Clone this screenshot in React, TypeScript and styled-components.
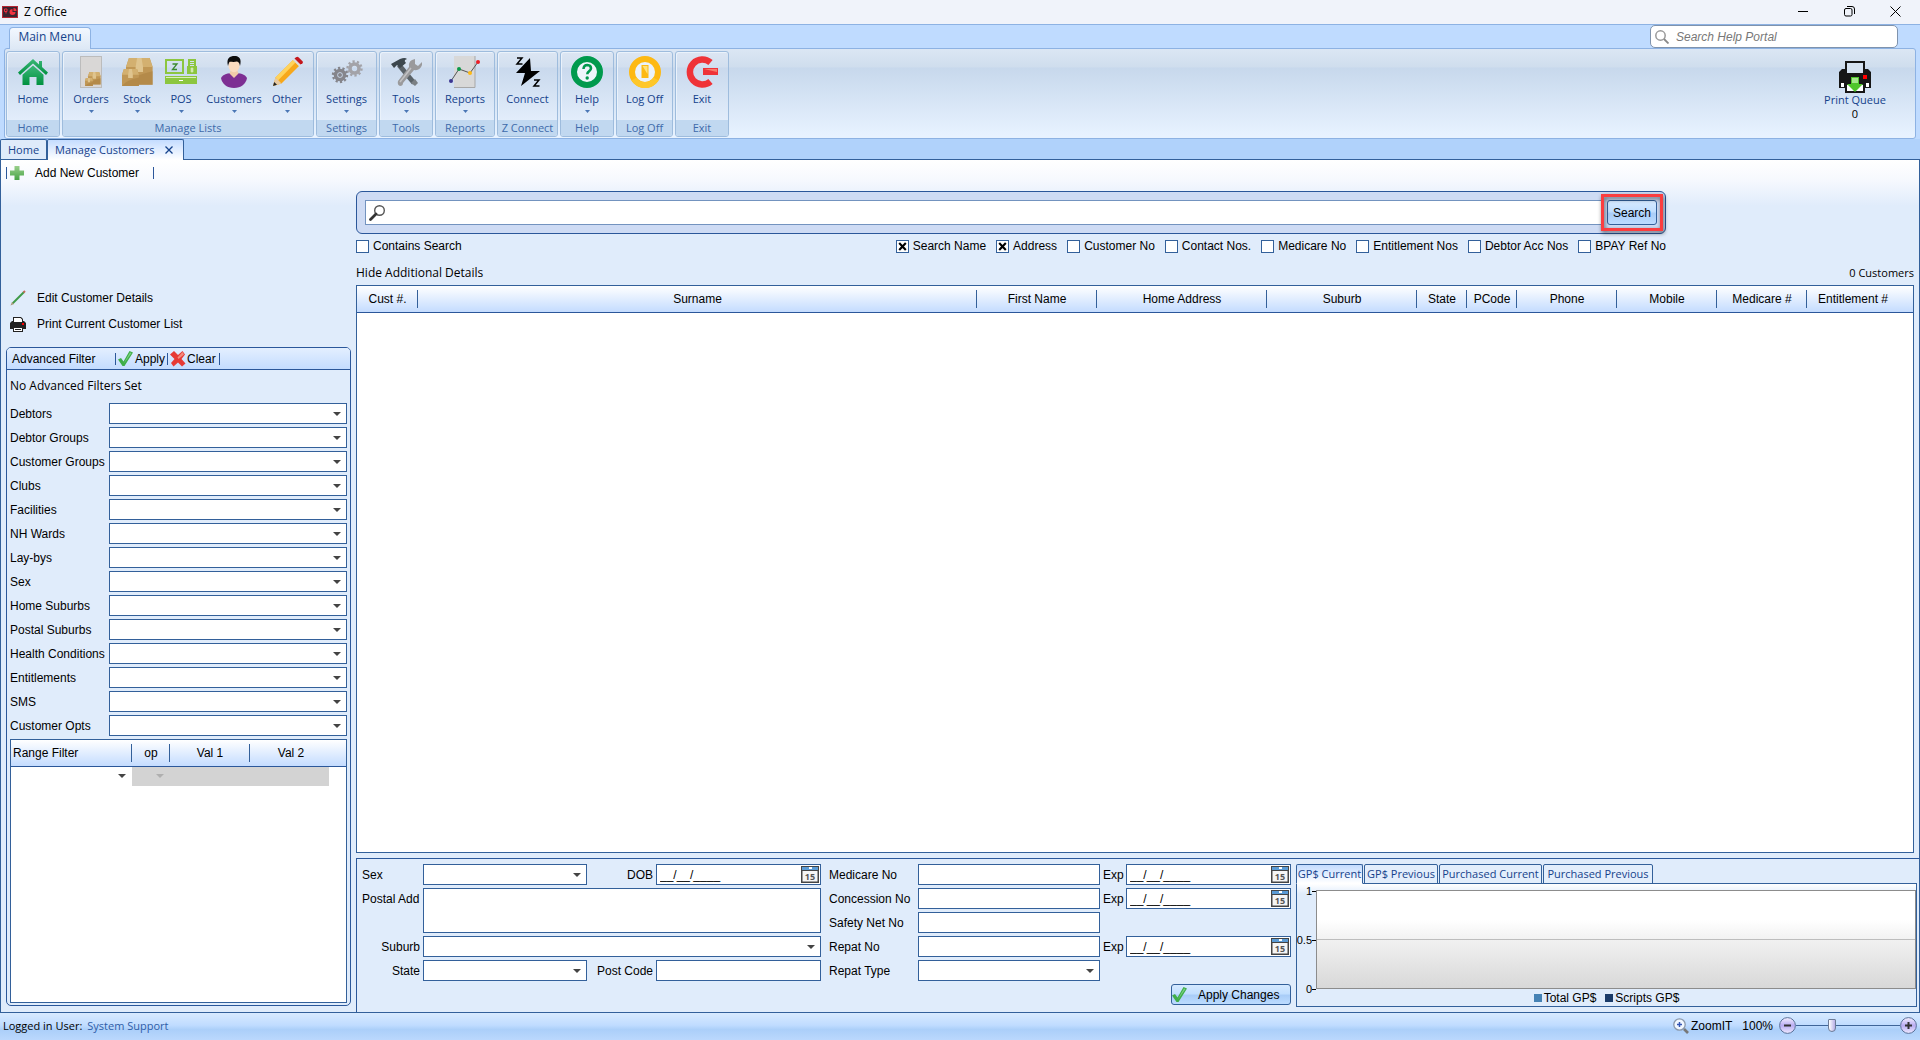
import React from "react";
import styled, { createGlobalStyle, css } from "styled-components";

const LINE = "#33609a";
const DEEP = "#2b579a";
const INK = "#15428b";
const FACE = "#e0ecfb";
const UI = `"Open Sans", "Noto Sans", sans-serif`;
const ARIAL = `"Liberation Sans", Arial, sans-serif`;

const svgUrl = (s: string) => `url("data:image/svg+xml,${encodeURIComponent(s)}")`;
const arrowImage = (color: string) =>
  svgUrl(`<svg xmlns="http://www.w3.org/2000/svg" width="8" height="4"><path d="M0 0h8L4 4z" fill="${color}"/></svg>`);
const crossImage = svgUrl(
  `<svg xmlns="http://www.w3.org/2000/svg" width="9" height="9"><path d="M1.2 1l6.6 7M7.8 1L1.2 8" stroke="#000" stroke-width="2.1"/></svg>`
);

const Global = createGlobalStyle`
  *, *::before, *::after { box-sizing: border-box; }
  body { margin: 0; background: ${FACE}; font-family: ${ARIAL}; font-size: 12px; line-height: 16px; color: #000; }
  button, input, select, textarea { font: inherit; color: inherit; margin: 0; padding: 0; border: 0; background: none; border-radius: 0; }
  h2, p { margin: 0; font-size: inherit; font-weight: normal; }
  svg { display: block; flex: none; }
`;

const Window = styled.div`
  min-height: 100vh;
  display: flex;
  flex-direction: column;
`;

/* ---------- title bar ---------- */
const TitleBar = styled.header`
  height: 25px;
  display: flex;
  align-items: center;
  gap: 6px;
  padding: 0 2px 1px;
  background: #f0f3fa;
  border-bottom: 1px solid #8db2e3;
  font-family: ${UI};
`;
const WindowButtons = styled.div`
  margin-left: auto;
  display: flex;
`;
const WindowButton = styled.button`
  width: 46px;
  height: 20px;
  display: grid;
  place-items: center;
`;

/* ---------- ribbon ---------- */
const RibbonTabs = styled.div`
  height: 23px;
  display: flex;
  align-items: flex-end;
  justify-content: space-between;
  padding: 0 22px 0 9px;
  background: #bfdbff;
`;
const RibbonTab = styled.button`
  height: 22px;
  width: 82px;
  margin-bottom: -1px;
  padding-bottom: 4px;
  border: 1px solid #8db2e3;
  border-bottom: 0;
  border-radius: 4px 4px 0 0;
  background: linear-gradient(#f2f7fe, #dde8f5);
  font-family: ${UI};
  color: ${INK};
  position: relative;
`;
const HelpSearch = styled.label`
  width: 248px;
  height: 23px;
  display: flex;
  align-items: center;
  gap: 7px;
  padding-left: 4px;
  border: 1px solid #7f93ad;
  border-radius: 5px;
  background: #fff;
  input { flex: 1; min-width: 0; outline: 0; font-style: italic; }
  input::placeholder { color: #777; opacity: 1; }
`;
const RibbonBack = styled.div`
  background: #bfdbff;
  padding: 0 4px;
`;
const Ribbon = styled.nav`
  height: 91px;
  display: flex;
  gap: 2px;
  padding: 2px 28px 1px 1px;
  border: 1px solid #8db2e3;
  border-radius: 3px;
  background: linear-gradient(#dbe6f4 0, #cfdded 18px, #c7d8ec 19px, #e7f2ff 86px, #e7f2ff 100%);
`;
const Group = styled.section<{ $w: number }>`
  width: ${(p) => p.$w}px;
  display: flex;
  flex-direction: column;
  border: 1px solid #9ebcdd;
  border-radius: 3px;
  box-shadow: inset 1px 1px 0 #eaf2fb;
  background: linear-gradient(#dce6f3 0, #d2dfef 15px, #c9d9ed 16px, #e2edfb 68px);
  overflow: hidden;
`;
const GroupItems = styled.div`
  flex: 1;
  display: flex;
  justify-content: center;
`;
const GroupTitle = styled.h2`
  height: 16px;
  line-height: 16px;
  text-align: center;
  background: #c1d8f0;
  font-family: ${UI};
  font-size: 11px;
  color: #3e6aaa;
`;
const RibbonButton = styled.button<{ $w: number }>`
  width: ${(p) => p.$w}px;
  display: flex;
  flex-direction: column;
  align-items: center;
  padding-top: 4px;
  font-family: ${UI};
  font-size: 11px;
  line-height: 16px;
  color: ${INK};
  white-space: nowrap;
`;
const RibbonLabel = styled.span`
  margin-top: 3px;
  margin-bottom: 3px;
`;
const QueueButton = styled(RibbonButton)`
  margin-left: auto;
  padding-top: 10px;
  line-height: 14px;
  small { font-size: 11px; color: #000; }
`;

/* ---------- document tabs ---------- */
const DocTabs = styled.div`
  height: 21px;
  display: flex;
  align-items: flex-end;
  background: #b0d2fb;
  border-bottom: 1px solid ${LINE};
`;
const DocTab = styled.button<{ $active?: boolean }>`
  height: 20px;
  display: flex;
  align-items: center;
  gap: 10px;
  padding: 0 7px 0 7px;
  border: 1px solid ${LINE};
  border-bottom: 0;
  border-radius: 2px 2px 0 0;
  background: #dfebfa;
  font-family: ${UI};
  font-size: 11px;
  color: ${INK};
  ${(p) =>
    p.$active &&
    css`
      height: 21px;
      margin-bottom: -1px;
      padding-right: 10px;
      background: linear-gradient(#c4dcff, #fff);
    `}
`;

/* ---------- page ---------- */
const Page = styled.main`
  flex: 1;
  display: flex;
  flex-direction: column;
  border: solid ${LINE};
  border-width: 0 1px;
  background: linear-gradient(#fff 0, #f6f9fe 20px, ${FACE} 46px);
`;
const Toolbar = styled.div`
  height: 26px;
  display: flex;
  align-items: center;
  padding-left: 5px;
`;
const Sep = styled.i`
  width: 1px;
  height: 12px;
  background: ${DEEP};
`;
const ToolButton = styled.button<{ $gap: number; $pad?: number }>`
  display: flex;
  align-items: center;
  gap: ${(p) => p.$gap}px;
  padding: 0 ${(p) => p.$pad || 0}px 0 2px;
  white-space: nowrap;
`;
const Columns = styled.div`
  flex: 1;
  display: flex;
`;

const Side = styled.aside`
  width: 355px;
  flex: none;
  display: flex;
  flex-direction: column;
  padding: 99px 5px 6px 5px;
`;
const SideLink = styled.button`
  height: 26px;
  display: flex;
  align-items: center;
  gap: 11px;
  padding-left: 4px;
`;
const FilterPanel = styled.section`
  flex: 1;
  display: flex;
  flex-direction: column;
  margin-top: 10px;
  border: 1px solid ${DEEP};
  border-radius: 5px;
`;
const FilterHead = styled.div`
  height: 22px;
  display: flex;
  align-items: center;
  padding-left: 5px;
  border-bottom: 1px solid ${DEEP};
  border-radius: 4px 4px 0 0;
  background: linear-gradient(#e3efff, #c4dcff);
  h2 { width: 103px; }
`;
const FilterBody = styled.div`
  flex: 1;
  display: flex;
  flex-direction: column;
  padding: 8px 3px 2px;
`;
const FilterNote = styled.p`
  font-family: ${UI};
  margin-bottom: 9px;
`;
const FilterRow = styled.div`
  display: grid;
  grid-template-columns: 99px 1fr;
  align-items: center;
  margin-bottom: 3px;
  white-space: nowrap;
`;

const field = css`
  height: 21px;
  min-width: 0;
  width: 100%;
  border: 1px solid ${LINE};
  background: #fff;
  outline: 0;
`;
const TextInput = styled.input`${field}`;
const TextArea = styled.textarea`
  ${field}
  height: 45px;
  resize: none;
  display: block;
`;
const Select = styled.select`
  ${field}
  appearance: none;
  background: #fff ${arrowImage("#444")} right 5px center / 8px 4px no-repeat;
`;
const BareSelect = styled.select<{ $muted?: boolean }>`
  appearance: none;
  display: block;
  width: 100%;
  height: 19px;
  outline: 0;
  background: ${(p) => arrowImage(p.$muted ? "#a0a0a0" : "#444")} right 6px center / 8px 4px no-repeat;
`;

const GridBox = styled.div`
  flex: 1;
  border: 1px solid ${LINE};
  background: #fff;
`;
const Table = styled.table`
  width: 100%;
  table-layout: fixed;
  border-collapse: collapse;
  thead { background: linear-gradient(#fff, #c4dcff); }
  thead tr { height: 26px; border-bottom: 1px solid ${DEEP}; }
  th {
    padding: 0 2px;
    font-weight: normal;
    white-space: nowrap;
    background: linear-gradient(${LINE}, ${LINE}) right center / 1px 18px no-repeat;
  }
  th:last-child { background: none; padding-right: 16px; }
  td { padding: 0; height: 19px; }
  td:last-child { padding-right: 17px; }
`;
const RangeTable = styled(Table)`
  th:first-child { text-align: left; }
`;
const MutedCell = styled.td`
  background: #d3d3d3;
`;
const MutedFill = styled.div`
  height: 19px;
  background: #d3d3d3;
`;

const Main = styled.div`
  flex: 1;
  min-width: 0;
  display: flex;
  flex-direction: column;
`;
const SearchArea = styled.div`
  width: 1310px;
  max-width: 100%;
  padding-top: 5px;
`;
const SearchBox = styled.form`
  height: 43px;
  display: flex;
  align-items: center;
  gap: 5px;
  padding: 0 8px;
  border: 1px solid ${DEEP};
  border-radius: 6px;
  background: #cedbf4;
`;
const SearchField = styled.label`
  flex: 1;
  height: 25px;
  display: flex;
  align-items: center;
  padding-left: 3px;
  border: 1px solid #7393bf;
  background: #fff;
  input { flex: 1; margin-left: 6px; outline: 0; }
`;
const Highlight = styled.div`
  position: relative;
  &::after {
    content: "";
    position: absolute;
    inset: -6px;
    border: 3px solid #fb3d3f;
    filter: drop-shadow(1px 2px 2px rgba(0, 0, 0, 0.6));
    pointer-events: none;
  }
`;
const PushButton = styled.button`
  display: flex;
  align-items: center;
  border: 1px solid ${LINE};
  border-radius: 3px;
  background: linear-gradient(#d5e9ff 0, #c2dfff 45%, #a9cdf8 55%, #bddcff 100%);
`;
const SearchButton = styled(PushButton)`
  width: 50px;
  height: 25px;
  justify-content: center;
`;
const CheckRow = styled.div`
  display: flex;
  gap: 10px;
  margin-top: 4px;
`;
const Check = styled.label`
  display: flex;
  align-items: center;
  gap: 4px;
  white-space: nowrap;
  &:first-child { margin-right: auto; }
  input {
    appearance: none;
    width: 13px;
    height: 13px;
    border: 1px solid ${LINE};
    background: #fff;
  }
  input:checked { background: #fff ${crossImage} center no-repeat; }
`;
const GridCaption = styled.div`
  display: flex;
  justify-content: space-between;
  margin: 11px 5px 4px 0;
  font-family: ${UI};
  button { line-height: 16px; }
  span { font-size: 11px; }
`;
const MainGrid = styled(GridBox)`
  margin: 0 5px 5px 0;
`;
const Details = styled.section`
  display: flex;
  align-items: flex-start;
  gap: 5px;
  padding: 5px 2px 5px 5px;
  border: solid ${DEEP};
  border-width: 1px 0 0 1px;
`;
const DetailForm = styled.form`
  display: grid;
  grid-template-columns: 58px 164px 63px 165px 91px 182px 20px 165px;
  grid-auto-rows: 21px;
  gap: 3px;
  align-items: center;
  white-space: nowrap;
`;
const Cell = styled.div<{ $at: string }>`
  grid-area: ${(p) => p.$at};
  display: flex;
`;
const Label = styled.label<{ $at: string; $right?: boolean }>`
  grid-area: ${(p) => p.$at};
  text-align: ${(p) => (p.$right ? "right" : "left")};
  padding-left: ${(p) => (p.$at.endsWith("/ 5") ? 5 : 0)}px;
`;
const DateBox = styled.div`
  ${field}
  display: flex;
  align-items: center;
  padding: 0 1px 0 3px;
  input { flex: 1; min-width: 0; outline: 0; height: 19px; }
`;
const ApplyButton = styled(PushButton)`
  width: 120px;
  height: 21px;
  margin-left: auto;
  gap: 10px;
`;

const Chart = styled.section`
  flex: 1;
  min-width: 0;
  height: 143px;
  display: flex;
  flex-direction: column;
`;
const ChartTabs = styled.div`
  display: flex;
  gap: 1px;
`;
const ChartTab = styled.button<{ $w: number; $active?: boolean }>`
  width: ${(p) => p.$w}px;
  height: 20px;
  border: 1px solid ${LINE};
  border-radius: 2px 2px 0 0;
  background: #e3eefc;
  font-family: ${UI};
  font-size: 11px;
  color: ${INK};
  white-space: nowrap;
  display: grid;
  place-content: center;
  ${(p) =>
    p.$active &&
    css`
      position: relative;
      border-bottom-color: #fff;
      background: linear-gradient(#c4dcff, #fff);
    `}
`;
const ChartBody = styled.div`
  flex: 1;
  margin-top: -1px;
  display: flex;
  flex-direction: column;
  border: 1px solid ${LINE};
  background: linear-gradient(#fff, ${FACE} 10px);
`;
const PlotRow = styled.div`
  height: 112px;
  display: flex;
`;
const Axis = styled.div`
  width: 19px;
  display: flex;
  flex-direction: column;
  justify-content: space-between;
  align-items: flex-end;
  line-height: 14px;
  font-size: 11px;
  span { display: flex; align-items: center; }
  span::after { content: ""; width: 4px; height: 1px; background: #000; }
`;
const Plot = styled.div`
  flex: 1;
  margin: 6px 0 7px;
  border: 1px solid #8c8c8c;
  background:
    linear-gradient(#bdbdbd, #bdbdbd) center / 100% 1px no-repeat,
    linear-gradient(#fff 30%, #f0f0f0 52%, #d8d8d8);
`;
const Legend = styled.div`
  display: flex;
  justify-content: center;
  gap: 9px;
  margin-top: -6px;
  line-height: 16px;
`;
const LegendItem = styled.span<{ $c: string }>`
  display: flex;
  align-items: center;
  gap: 2px;
  &::before { content: ""; width: 8px; height: 8px; background: ${(p) => p.$c}; }
`;

/* ---------- status bar ---------- */
const StatusBar = styled.footer`
  height: 28px;
  display: flex;
  align-items: center;
  padding: 0 3px 2px;
  border-top: 1px solid ${LINE};
  background: linear-gradient(#d8eaff 0, #c0dcff 45%, #abcff9 62%, #bbd8fd 100%);
  font-family: ${UI};
  font-size: 11px;
  a { color: #2f5da8; text-decoration: none; margin-left: 5px; }
`;
const ZoomTools = styled.div`
  margin-left: auto;
  display: flex;
  align-items: center;
  font-family: ${ARIAL};
  font-size: 12px;
  output { margin: 0 6px 0 10px; }
`;
const RoundButton = styled.button`
  width: 17px;
  height: 17px;
`;
const Slider = styled.input`
  appearance: none;
  width: 104px;
  height: 14px;
  background: linear-gradient(#3f6599, #3f6599) center / 100% 1px no-repeat;
  outline: 0;
  &::-webkit-slider-thumb {
    appearance: none;
    width: 8px;
    height: 13px;
    border: 1px solid #6d7b96;
    border-radius: 1px 1px 4px 4px;
    background: linear-gradient(90deg, #fff, #b7aee6);
  }
`;

/* ---------- icons ---------- */
const AppIcon = () => (
  <svg width="16" height="12" viewBox="0 0 16 12">
    <rect width="16" height="12" fill="#3a2530" />
    <rect x=".5" y=".5" width="15" height="11" fill="none" stroke="#b32633" />
    <path d="M2.500 3h2.500v2.500h-2.500zM4 6v1.500" stroke="#f2313f" fill="none" />
    <path d="M10.500 3a3 3 0 1 0 3 3h-3zM11.500 2v3h3a3 3 0 0 0-3-3z" fill="#f2313f" />
  </svg>
);
const HomeIcon = () => (
  <svg width="32" height="32" viewBox="0 0 32 32">
    <defs><linearGradient id="hm" x1="0" y1="0" x2="0" y2="1"><stop offset="0" stopColor="#3cb878" /><stop offset="1" stopColor="#00913f" /></linearGradient></defs>
    <path d="M16 3l6 5.400V5h3v6l6 5.600-2 2.400L16 7.500 3 19l-2-2.400z" fill="url(#hm)" />
    <path d="M16 9.500l10.500 9.300V29h-7v-8h-7v8h-7V18.800z" fill="url(#hm)" />
  </svg>
);
const Box = ({ x, y, s }: { x: number; y: number; s: number }) => (
  <g transform={`translate(${x} ${y}) scale(${s})`}>
    <path d="M2 0h14l2 6v12H0V6z" fill="#c09755" />
    <path d="M2 0h14l2 6H0z" fill="#d3b070" />
    <path d="M7.500 0h3l1 6v3.500h-5V6z" fill="#dfc48e" />
    <path d="M0 18Q4 12 18 9v9z" fill="#a97f40" opacity=".55" />
  </g>
);
const OrdersIcon = () => (
  <svg width="32" height="32" viewBox="0 0 32 32">
    <rect x="5.500" y=".5" width="21" height="31" fill="#d9d7d6" stroke="#bcbcbc" />
    <Box x={13} y={16} s={0.7} /><Box x={10} y={22} s={0.44} />
  </svg>
);
const StockIcon = () => (
  <svg width="32" height="32" viewBox="0 0 32 32"><Box x={5} y={2} s={1.48} /><Box x={1} y={13} s={0.94} /></svg>
);
const PosIcon = () => (
  <svg width="34" height="32" viewBox="0 0 34 32">
    <g fill="none" stroke="#8cc63f" strokeWidth="2">
      <rect x="2" y="4" width="17" height="13" />
      <path d="M25 11V4h6v7" />
    </g>
    <path d="M23 10h10v8H23zM1 20h32v8H1z" fill="#8cc63f" />
    <path d="M2 21.500h30" stroke="#d9efb9" />
    <path d="M26 6.500h4M26 8.500h4" stroke="#8cc63f" />
    <path d="M28 11.500v5M26.500 13h3M26.500 15h3" stroke="#e8f5d8" /><path d="M15 24.500h4" stroke="#fff" />
    <path d="M8.500 8h4.500l-4.500 5.500H13" fill="none" stroke="#3b8a2e" strokeWidth="1.300" />
  </svg>
);
const CustomersIcon = () => (
  <svg width="32" height="32" viewBox="0 0 32 32">
    <path d="M3 22c2-4 7-5 13-5s11 1 13 5c-1 6-6 10-13 10S4 28 3 22z" fill="#7d2f93" />
    <path d="M11.500 17.500L16 22l4.500-4.500L19 14h-6z" fill="#f1cba9" />
    <ellipse cx="16" cy="9.500" rx="5.500" ry="6.800" fill="#fbdcc0" />
    <path d="M10 10C8 2 12 0 16.500 0S24 2.500 22 10c-.5-3-1.500-4-3-4.500-3 1-7 0-7.500 .5S10.500 8 10 10z" fill="#0d0d0d" />
  </svg>
);
const PencilIcon = () => (
  <svg width="32" height="32" viewBox="0 0 32 32">
    <path d="M2 30l2.500-8.500L22 4l6 6L10.500 27.500z" fill="#f7a81b" />
    <path d="M4.500 21.500L22 4l2.500 2.500L7 24.500z" fill="#ffd35c" />
    <path d="M2 30l2.500-8.500 6 6z" fill="#e7c9a0" /><path d="M2 30l1.200-4 2.800 2.800z" fill="#222" />
    <path d="M22 4l1.500-1.500 6 6L28 10z" fill="#ddd" /><path d="M23.500 2.500L25 1.200q1.500-.8 2.500 0l4 4q.8 1.300 0 2L29.500 8.500z" fill="#c4161c" />
  </svg>
);
const Gear = ({ x, y, r, c }: { x: number; y: number; r: number; c: string }) => (
  <g transform={`translate(${x} ${y})`}>
    <circle r={r - 2.5} fill="none" stroke={c} strokeWidth="3.600" />
    <circle r={r} fill="none" stroke={c} strokeWidth="2.400" strokeDasharray={`${(Math.PI * r) / 10} ${(Math.PI * r) / 10}`} />
  </g>
);
const SettingsIcon = () => (
  <svg width="32" height="32" viewBox="0 0 32 32">
    <Gear x={23.500} y={12.500} r={7} c="#a3a3a8" /><Gear x={9} y={19} r={7} c="#85858b" /><circle cx="9" cy="19" r="2" fill="#85858b" />
  </svg>
);
const ToolsIcon = () => (
  <svg width="32" height="32" viewBox="0 0 32 32">
    <path d="M9 9l15 18" stroke="#5a6268" strokeWidth="5" />
    <path d="M1 8l9-5q5-2 7 0l-2 1q-1 1 1 3l-6 5-3-3-3 3z" fill="#3c474d" />
    <path d="M21 27l4 3 3-3-3-4" fill="#7b8084" />
    <path d="M25 3q-7 1-6 8L8 25q-1 4 2 5 3 0 3-3l11-13q6 1 8-5V6l-4 4-3-2V3z" fill="#9a9a9c" />
    <path d="M21 12L10 26" stroke="#c2c2c4" strokeWidth="1.500" />
  </svg>
);
const ReportsIcon = () => (
  <svg width="32" height="32" viewBox="0 0 32 32">
    <path d="M5 0h21v31H5z" fill="#d8d8d8" /><path d="M26 0v31.500H5" fill="none" stroke="#a7a7a7" />
    <path d="M2 25l8-12 11 4 8-11" fill="none" stroke="#555" />
    <circle cx="2" cy="25" r="2" fill="#3b3590" /><circle cx="10" cy="13" r="2" fill="#0a9a48" /><circle cx="21" cy="17" r="2" fill="#fdb913" /><circle cx="29" cy="6" r="2" fill="#ed1c24" />
  </svg>
);
const ConnectIcon = () => (
  <svg width="32" height="32" viewBox="0 0 32 32">
    <path d="M18 2L4 17h9L9 30l19-15h-9z" fill="#000" />
    <path d="M5 2h5L5 8h5.500M22 24h5l-5 6h5.500" fill="none" stroke="#000" strokeWidth="1.500" />
  </svg>
);
const HelpIcon = () => (
  <svg width="32" height="32" viewBox="0 0 32 32">
    <circle cx="16" cy="16" r="13" fill="#eef5fb" stroke="#009a4d" strokeWidth="6" />
    <path d="M12.500 13q.3-4 3.800-4 3.700.2 3.700 3.300 0 1.700-2 3-1.700 1.100-1.700 3" fill="none" stroke="#009a4d" strokeWidth="2.600" />
    <circle cx="16.200" cy="22" r="1.700" fill="#009a4d" />
  </svg>
);
const LogOffIcon = () => (
  <svg width="32" height="32" viewBox="0 0 32 32">
    <circle cx="16" cy="16" r="13" fill="#eaf2fb" stroke="#fdb913" strokeWidth="6" />
    <path d="M5 23a13 13 0 0 0 22 0" fill="none" stroke="#fec72a" strokeWidth="6" />
    <path d="M12.500 9h7v13h-7z" fill="#fdb913" /><path d="M13.500 10h5v8z" fill="#ffe27a" />
  </svg>
);
const ExitIcon = () => (
  <svg width="32" height="32" viewBox="0 0 32 32">
    <path d="M24.500 6.500A12.500 12.500 0 1 0 24.500 25.500" fill="none" stroke="#ef3338" strokeWidth="6.500" />
    <path d="M17 12h15v7H17z" fill="#ef3338" /><path d="M18 13h13v3z" fill="#f77b6b" />
  </svg>
);
const QueueIcon = () => (
  <svg width="32" height="32" viewBox="0 0 32 32">
    <path d="M6 8V0h20v8h3l3 3v16h-6v5H6v-5H0V11l3-3z" fill="#161616" />
    <path d="M8 2h16v10H8z" fill="#d5e2f1" /><path d="M8 24h16v6H8z" fill="#fff" />
    <path d="M2 22h3v4H2zM27 22h3v4h-3z" fill="#fff" /><rect x="24" y="14" width="4" height="4" fill="#f00" />
    <path d="M12 16h8v7h4l-8 8-8-8h4z" fill="#4fc52b" /><path d="M13 17h6v5h-6z" fill="#a5e88c" />
  </svg>
);
const PrinterIcon = () => (
  <svg width="16" height="16" viewBox="0 0 16 16">
    <path d="M3 5V1h8l2 2v2h1l2 2v6h-3v3H3v-3H0V7l2-2z" fill="#222" />
    <path d="M4 2h6.500L12 3.500V6H4zM4 12h8v3H4z" fill="#fff" /><path d="M5 13.500h6" stroke="#222" /><rect x="12" y="7" width="2" height="2" fill="#f00" />
  </svg>
);
const PlusIcon = () => (
  <svg width="16" height="16" viewBox="0 0 16 16">
    <defs><linearGradient id="pl" x1="0" y1="0" x2="0" y2="1"><stop offset="0" stopColor="#9ad08c" /><stop offset="1" stopColor="#46a344" /></linearGradient></defs>
    <path d="M5.500 1h5v4.500H15v5h-4.500V15h-5v-4.500H1v-5h4.500z" fill="url(#pl)" />
  </svg>
);
const ThinPencilIcon = () => (
  <svg width="16" height="16" viewBox="0 0 16 16"><path d="M2.500 13.500L14 2" stroke="#3f9b48" strokeWidth="2" /><path d="M13.500 2.500L15 1" stroke="#c66a5a" strokeWidth="2" /><path d="M.5 15.500l1.500-3.500 2 2z" fill="#a89878" /></svg>
);
const TickIcon = () => (
  <svg width="16" height="16" viewBox="0 0 16 16"><path d="M0 8.500l3-1.500 2.500 3.500L11.500 0 15 1.500 6.500 15H4.500z" fill="#3fae49" /><path d="M12 1.500l1.500.5-8 11z" fill="#7fd184" /></svg>
);
const CrossIcon = () => (
  <svg width="16" height="16" viewBox="0 0 16 16"><path d="M4 0l4 4 4.500-4L15 3.500 11.500 8l4 4.500L12 15.500l-4-4-4.500 4L1 12l3.500-4L0 3.500z" fill="#e63a35" /><path d="M12.500 1L14 3.500 8.500 8l-1-1.500z" fill="#f58b7c" /></svg>
);
const LensIcon = () => (
  <svg width="16" height="16" viewBox="0 0 16 16"><circle cx="10.500" cy="5.500" r="4.800" fill="none" stroke="#555" strokeWidth="1.400" /><path d="M7 9l-5.500 5.500" stroke="#333" strokeWidth="2.800" strokeLinecap="round" /></svg>
);
const HelpLensIcon = () => (
  <svg width="14" height="14" viewBox="0 0 14 14"><circle cx="5.500" cy="5.500" r="4.700" fill="none" stroke="#999" strokeWidth="1.500" /><path d="M9 9l4.500 4.500" stroke="#888" strokeWidth="1.800" /></svg>
);
const ZoomIcon = () => (
  <svg width="18" height="16" viewBox="0 0 18 16"><circle cx="6.500" cy="6.500" r="5.700" fill="#f2f8ff" stroke="#8a98ab" strokeWidth="1.300" /><path d="M6.500 4v5M4 6.500h5" stroke="#3455b5" strokeWidth="1.500" /><path d="M11 11l4 4" stroke="#777" strokeWidth="2.600" /></svg>
);
const CalendarIcon = () => (
  <svg width="18" height="17" viewBox="0 0 18 17">
    <rect x=".75" y=".75" width="16.500" height="15.500" fill="#f5f5f5" stroke="#444" strokeWidth="1.500" />
    <path d="M1 1h16v3H1z" fill="#5b9bd5" /><path d="M8 1h3v2H8z" fill="#fff" /><path d="M1 4.500h16" stroke="#444" />
    <text x="9" y="14" fontFamily="Open Sans, sans-serif" fontSize="9" fontWeight="700" textAnchor="middle" fill="#555">15</text>
  </svg>
);
const RoundIcon = ({ plus }: { plus?: boolean }) => (
  <svg width="17" height="17" viewBox="0 0 17 17">
    <defs><linearGradient id="rd" x1="0" y1="0" x2="0" y2="1"><stop offset="0" stopColor="#f4f0ff" /><stop offset=".5" stopColor="#b9acf2" /><stop offset="1" stopColor="#efeaff" /></linearGradient></defs>
    <circle cx="8.500" cy="8.500" r="7.900" fill="url(#rd)" stroke="#5b7299" />
    <path d={plus ? "M5 8.500h7M8.500 5v7" : "M5 8.500h7"} stroke="#333" strokeWidth="2" />
  </svg>
);
const DownArrow = () => <svg width="5" height="3" viewBox="0 0 5 3"><path d="M0 0h5L2.500 3z" fill="#4a76b5" /></svg>;

/* ---------- data ---------- */
type Item = { label: string; icon: React.FC; w: number; menu?: boolean };
const groups: { title: string; w: number; items: Item[] }[] = [
  { title: "Home", w: 54, items: [{ label: "Home", icon: HomeIcon, w: 50 }] },
  {
    title: "Manage Lists",
    w: 252,
    items: [
      { label: "Orders", icon: OrdersIcon, w: 48, menu: true },
      { label: "Stock", icon: StockIcon, w: 44, menu: true },
      { label: "POS", icon: PosIcon, w: 44, menu: true },
      { label: "Customers", icon: CustomersIcon, w: 62, menu: true },
      { label: "Other", icon: PencilIcon, w: 44, menu: true },
    ],
  },
  { title: "Settings", w: 61, items: [{ label: "Settings", icon: SettingsIcon, w: 56, menu: true }] },
  { title: "Tools", w: 54, items: [{ label: "Tools", icon: ToolsIcon, w: 50, menu: true }] },
  { title: "Reports", w: 60, items: [{ label: "Reports", icon: ReportsIcon, w: 56, menu: true }] },
  { title: "Z Connect", w: 61, items: [{ label: "Connect", icon: ConnectIcon, w: 56 }] },
  { title: "Help", w: 54, items: [{ label: "Help", icon: HelpIcon, w: 50, menu: true }] },
  { title: "Log Off", w: 57, items: [{ label: "Log Off", icon: LogOffIcon, w: 50 }] },
  { title: "Exit", w: 54, items: [{ label: "Exit", icon: ExitIcon, w: 50 }] },
];
const filters = [
  "Debtors", "Debtor Groups", "Customer Groups", "Clubs", "Facilities", "NH Wards", "Lay-bys", "Sex",
  "Home Suburbs", "Postal Suburbs", "Health Conditions", "Entitlements", "SMS", "Customer Opts",
];
const checks: [string, boolean][] = [
  ["Contains Search", false], ["Search Name", true], ["Address", true], ["Customer No", false], ["Contact Nos.", false],
  ["Medicare No", false], ["Entitlement Nos", false], ["Debtor Acc Nos", false], ["BPAY Ref No", false],
];
const columns: [string, number?][] = [
  ["Cust #.", 61], ["Surname"], ["First Name", 120], ["Home Address", 170], ["Suburb", 150], ["State", 50],
  ["PCode", 50], ["Phone", 100], ["Mobile", 100], ["Medicare #", 90], ["Entitlement #", 106],
];

const DateField = ({ id }: { id: string }) => (
  <DateBox>
    <input id={id} type="text" defaultValue="__/__/____" />
    <button type="button" aria-label="Choose date"><CalendarIcon /></button>
  </DateBox>
);

export default function App() {
  return (
    <Window>
      <Global />
      <TitleBar>
        <AppIcon />
        <span>Z Office</span>
        <WindowButtons>
          <WindowButton aria-label="Minimise"><svg width="11" height="11"><path d="M0 5.500h10" stroke="#000" /></svg></WindowButton>
          <WindowButton aria-label="Restore"><svg width="11" height="11" fill="none" stroke="#000"><rect x=".5" y="2.500" width="7.500" height="7.500" rx="1.500" /><path d="M3 .5h5q2.500 0 2.500 2.500v5" /></svg></WindowButton>
          <WindowButton aria-label="Close"><svg width="11" height="11"><path d="M.5.5l10 10M10.500.5l-10 10" stroke="#000" /></svg></WindowButton>
        </WindowButtons>
      </TitleBar>
      <RibbonTabs>
        <RibbonTab>Main Menu</RibbonTab>
        <HelpSearch>
          <HelpLensIcon />
          <input type="text" placeholder="Search Help Portal" aria-label="Search Help Portal" />
        </HelpSearch>
      </RibbonTabs>
      <RibbonBack>
        <Ribbon>
          {groups.map((g) => (
            <Group key={g.title} $w={g.w}>
              <GroupItems>
                {g.items.map((it) => (
                  <RibbonButton key={it.label} $w={it.w}>
                    <it.icon />
                    <RibbonLabel>{it.label}</RibbonLabel>
                    {it.menu && <DownArrow />}
                  </RibbonButton>
                ))}
              </GroupItems>
              <GroupTitle>{g.title}</GroupTitle>
            </Group>
          ))}
          <QueueButton $w={64}>
            <QueueIcon />
            <span>Print Queue</span>
            <small>0</small>
          </QueueButton>
        </Ribbon>
      </RibbonBack>
      <DocTabs>
        <DocTab>Home</DocTab>
        <DocTab $active>
          Manage Customers
          <svg width="8" height="8"><path d="M.5.5l7 7M7.500.5l-7 7" stroke={INK} strokeWidth="1.300" /></svg>
        </DocTab>
      </DocTabs>
      <Page>
        <Toolbar>
          <Sep />
          <ToolButton $gap={10} $pad={14}><PlusIcon />Add New Customer</ToolButton>
          <Sep />
        </Toolbar>
        <Columns>
          <Side>
            <SideLink><ThinPencilIcon />Edit Customer Details</SideLink>
            <SideLink><PrinterIcon />Print Current Customer List</SideLink>
            <FilterPanel>
              <FilterHead>
                <h2>Advanced Filter</h2>
                <Sep />
                <ToolButton $gap={1} $pad={2}><TickIcon />Apply</ToolButton>
                <Sep />
                <ToolButton $gap={1} $pad={3}><CrossIcon />Clear</ToolButton>
                <Sep />
              </FilterHead>
              <FilterBody>
                <FilterNote>No Advanced Filters Set</FilterNote>
                {filters.map((f, i) => (
                  <FilterRow key={f}>
                    <label htmlFor={`f${i}`}>{f}</label>
                    <Select id={`f${i}`} />
                  </FilterRow>
                ))}
                <GridBox>
                  <RangeTable>
                    <colgroup><col width={121} /><col width={38} /><col width={80} /><col /></colgroup>
                    <thead><tr><th>Range Filter</th><th>op</th><th>Val 1</th><th>Val 2</th></tr></thead>
                    <tbody>
                      <tr>
                        <td><BareSelect aria-label="Range Filter" /></td>
                        <MutedCell><BareSelect aria-label="op" $muted disabled /></MutedCell>
                        <MutedCell />
                        <td><MutedFill /></td>
                      </tr>
                    </tbody>
                  </RangeTable>
                </GridBox>
              </FilterBody>
            </FilterPanel>
          </Side>
          <Main>
            <SearchArea>
              <SearchBox onSubmit={(e) => e.preventDefault()}>
                <SearchField>
                  <LensIcon />
                  <input type="text" aria-label="Search customers" />
                </SearchField>
                <Highlight><SearchButton>Search</SearchButton></Highlight>
              </SearchBox>
              <CheckRow>
                {checks.map(([label, on]) => (
                  <Check key={label}><input type="checkbox" defaultChecked={on} />{label}</Check>
                ))}
              </CheckRow>
            </SearchArea>
            <GridCaption>
              <button>Hide Additional Details</button>
              <span>0 Customers</span>
            </GridCaption>
            <MainGrid>
              <Table>
                <colgroup>{columns.map(([c, w]) => <col key={c} width={w} />)}</colgroup>
                <thead><tr>{columns.map(([c]) => <th key={c}>{c}</th>)}</tr></thead>
              </Table>
            </MainGrid>
            <Details>
              <DetailForm onSubmit={(e) => e.preventDefault()}>
                <Label $at="1 / 1" htmlFor="sex">Sex</Label>
                <Cell $at="1 / 2"><Select id="sex" /></Cell>
                <Label $at="1 / 3" $right htmlFor="dob">DOB</Label>
                <Cell $at="1 / 4"><DateField id="dob" /></Cell>
                <Label $at="2 / 1" htmlFor="addr">Postal Add</Label>
                <Cell $at="2 / 2 / 4 / 5"><TextArea id="addr" /></Cell>
                <Label $at="4 / 1" $right htmlFor="suburb">Suburb</Label>
                <Cell $at="4 / 2 / 5 / 5"><Select id="suburb" /></Cell>
                <Label $at="5 / 1" $right htmlFor="state">State</Label>
                <Cell $at="5 / 2"><Select id="state" /></Cell>
                <Label $at="5 / 3" $right htmlFor="post">Post Code</Label>
                <Cell $at="5 / 4"><TextInput id="post" type="text" /></Cell>
                {["Medicare No", "Concession No", "Safety Net No", "Repat No"].map((l, i) => (
                  <React.Fragment key={l}>
                    <Label $at={`${i + 1} / 5`} htmlFor={`n${i}`}>{l}</Label>
                    <Cell $at={`${i + 1} / 6`}><TextInput id={`n${i}`} type="text" /></Cell>
                    {i !== 2 && (
                      <>
                        <Label $at={`${i + 1} / 7`} $right htmlFor={`e${i}`}>Exp</Label>
                        <Cell $at={`${i + 1} / 8`}><DateField id={`e${i}`} /></Cell>
                      </>
                    )}
                  </React.Fragment>
                ))}
                <Label $at="5 / 5" htmlFor="rtype">Repat Type</Label>
                <Cell $at="5 / 6"><Select id="rtype" /></Cell>
                <Cell $at="6 / 8"><ApplyButton><TickIcon />Apply Changes</ApplyButton></Cell>
              </DetailForm>
              <Chart>
                <ChartTabs>
                  <ChartTab $w={67} $active>GP$ Current</ChartTab>
                  <ChartTab $w={74}>GP$ Previous</ChartTab>
                  <ChartTab $w={103}>Purchased Current</ChartTab>
                  <ChartTab $w={110}>Purchased Previous</ChartTab>
                </ChartTabs>
                <ChartBody>
                  <PlotRow>
                    <Axis><span>1</span><span>0.5</span><span>0</span></Axis>
                    <Plot />
                  </PlotRow>
                  <Legend>
                    <LegendItem $c="#4682b4">Total GP$</LegendItem>
                    <LegendItem $c="#1a3b69">Scripts GP$</LegendItem>
                  </Legend>
                </ChartBody>
              </Chart>
            </Details>
          </Main>
        </Columns>
      </Page>
      <StatusBar>
        Logged in User: <a href="#user">System Support</a>
        <ZoomTools>
          <ZoomIcon />
          <span>ZoomIT</span>
          <output>100%</output>
          <RoundButton aria-label="Zoom out"><RoundIcon /></RoundButton>
          <Slider type="range" aria-label="Zoom" min={0} max={300} defaultValue={100} />
          <RoundButton aria-label="Zoom in"><RoundIcon plus /></RoundButton>
        </ZoomTools>
      </StatusBar>
    </Window>
  );
}
